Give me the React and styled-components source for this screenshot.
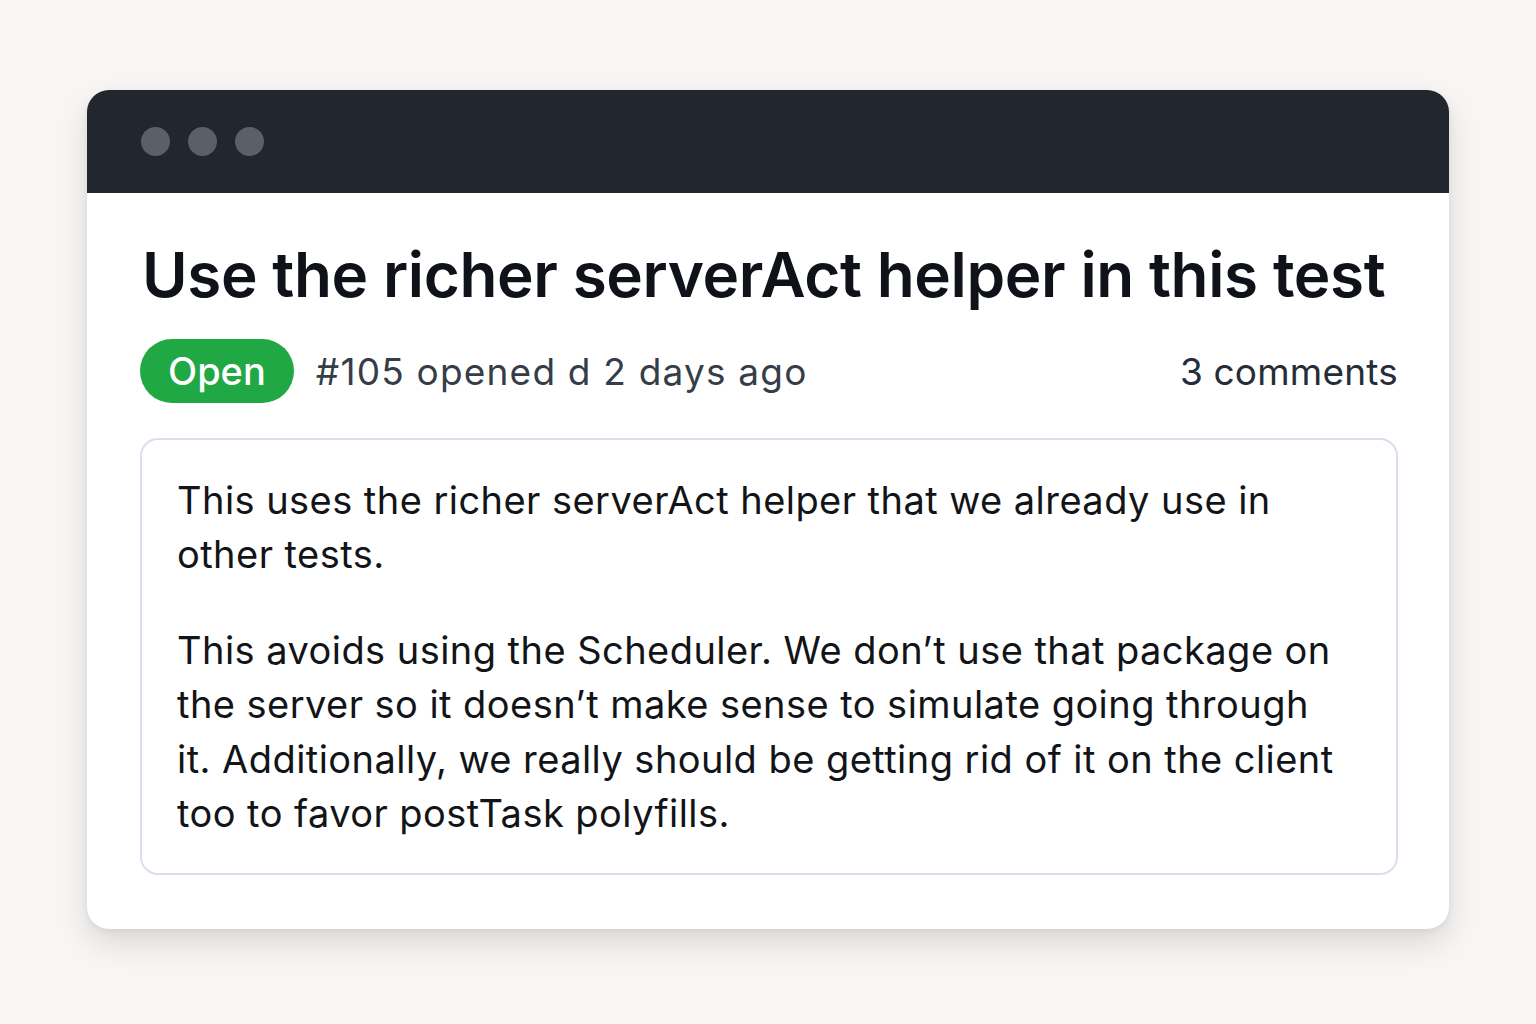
import styled, { createGlobalStyle } from 'styled-components';

const GlobalStyle = createGlobalStyle`
  body {
    margin: 0;
    background: #f7f6f4;
    font-family: Inter, "Noto Sans", sans-serif;
  }
`;

const Page = styled.div`
  min-height: 1024px;
  box-sizing: border-box;
  padding: 90px 87px;
`;

const Window = styled.div`
  width: 1362px;
  background: #ffffff;
  border-radius: 22px;
  overflow: hidden;
  box-shadow: 0 14px 30px rgba(0, 0, 0, 0.12), 0 2px 6px rgba(0, 0, 0, 0.06);
`;

const TitleBar = styled.div`
  height: 103px;
  background: #22262e;
  display: flex;
  align-items: center;
  gap: 18px;
  padding-left: 54px;
`;

const Dot = styled.span`
  width: 29px;
  height: 29px;
  border-radius: 50%;
  background: #5b5f68;
`;

const Content = styled.div`
  padding: 42px 51px 54px 53px;
`;

const Title = styled.h1`
  margin: 0;
  font-size: 62px;
  font-weight: 600;
  letter-spacing: -0.4px;
  color: #0f1319;
  line-height: 80px;
  padding-left: 2px;
  white-space: nowrap;
`;

const MetaRow = styled.div`
  display: flex;
  align-items: center;
  margin-top: 24px;
`;

const Badge = styled.span`
  height: 64px;
  padding: 0 28px;
  border-radius: 32px;
  background: #1fa844;
  color: #ffffff;
  font-size: 38px;
  font-weight: 500;
  display: flex;
  align-items: center;
`;

const Meta = styled.span`
  font-size: 37px;
  letter-spacing: 1.2px;
  color: #353d48;
  margin-left: 22px;
`;

const Comments = styled.span`
  margin-left: auto;
  font-size: 37px;
  letter-spacing: 0.2px;
  color: #252d38;
`;

const Body = styled.div`
  margin-top: 35px;
  border: 2px solid #dddeec;
  border-radius: 18px;
  padding: 33px 48px 33px 35px;
`;

const Paragraph = styled.p`
  margin: 0;
  font-size: 38px;
  letter-spacing: 0.45px;
  line-height: 54.4px;
  color: #121417;

  & + & {
    margin-top: 41px;
  }
`;

export default function App() {
  return (
    <>
      <GlobalStyle />
      <Page>
        <Window>
          <TitleBar>
            <Dot />
            <Dot />
            <Dot />
          </TitleBar>
          <Content>
            <Title>Use the richer serverAct helper in this test</Title>
            <MetaRow>
              <Badge>Open</Badge>
              <Meta>#105 opened d 2 days ago</Meta>
              <Comments>3 comments</Comments>
            </MetaRow>
            <Body>
              <Paragraph>
                This uses the richer serverAct helper that we already use in other tests.
              </Paragraph>
              <Paragraph>
                This avoids using the Scheduler. We don’t use that package on the server so it
                doesn’t make sense to simulate going through it. Additionally, we really should be
                getting rid of it on the client too to favor postTask polyfills.
              </Paragraph>
            </Body>
          </Content>
        </Window>
      </Page>
    </>
  );
}
